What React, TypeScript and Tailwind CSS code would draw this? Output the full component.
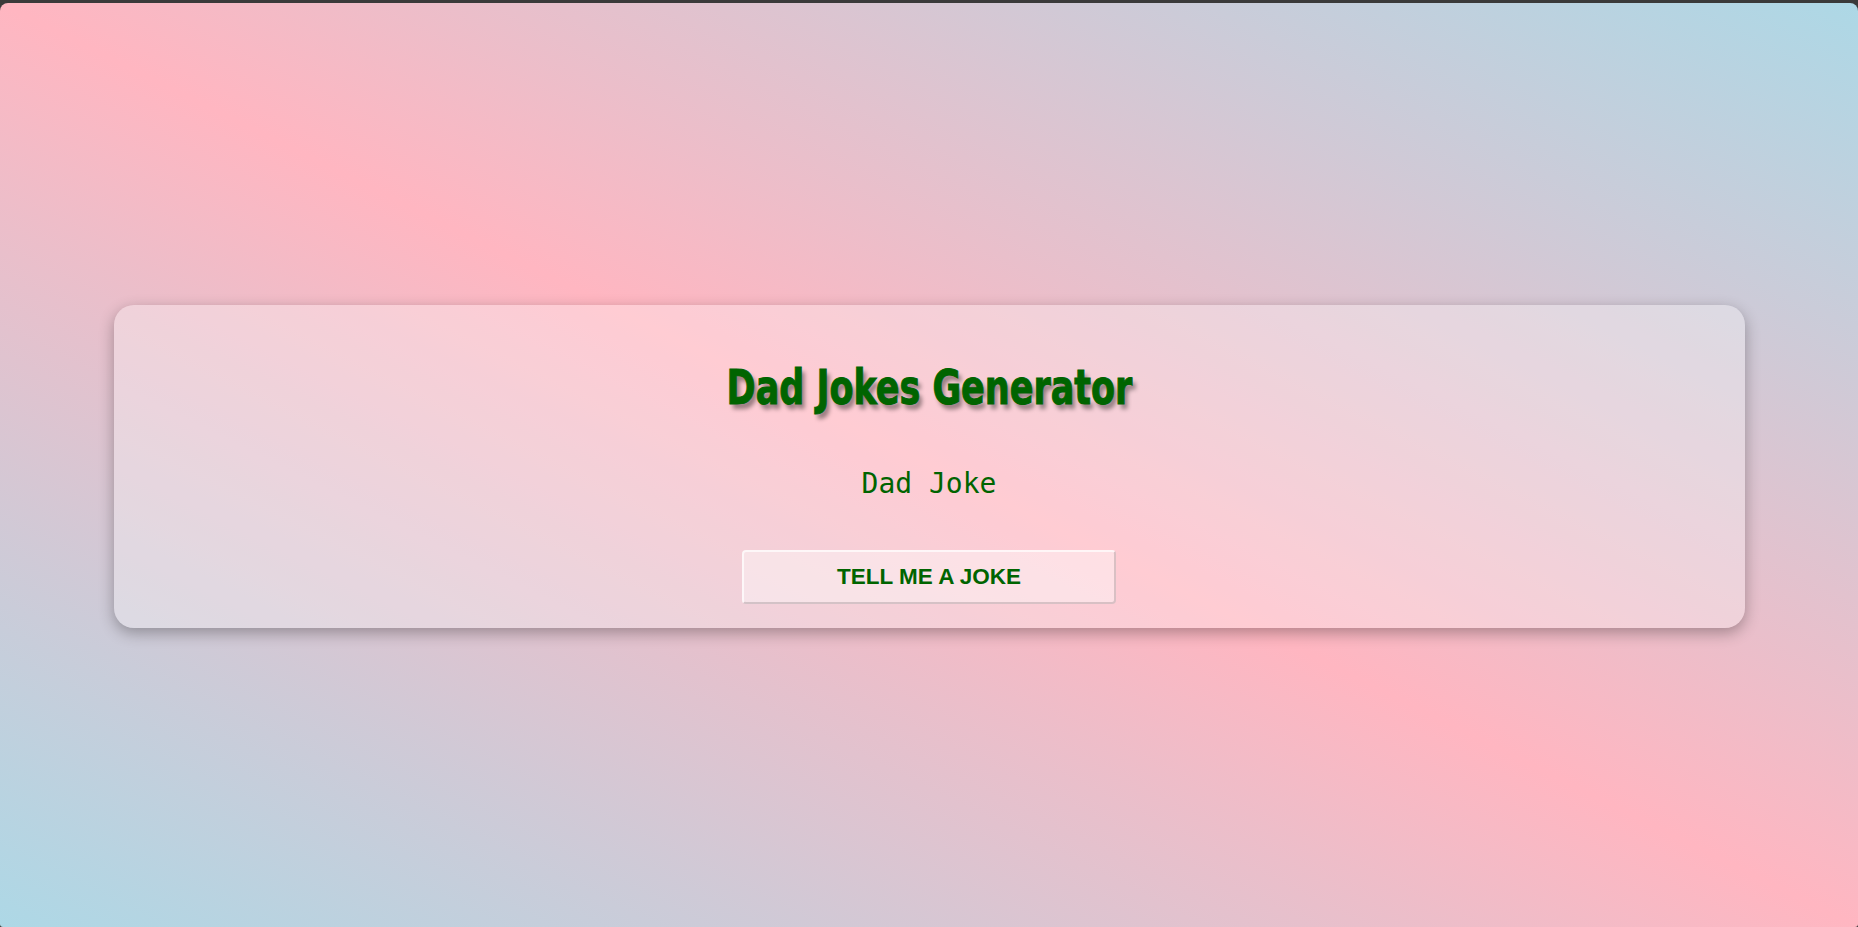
import React, { useState } from "react";

const jokes = [
  "Dad Joke",
  "I'm afraid for the calendar. Its days are numbered.",
  "Why do fathers take an extra pair of socks when they go golfing? In case they get a hole in one!",
  "What do you call a fake noodle? An impasta.",
];

export default function App() {
  const [joke, setJoke] = useState(jokes[0]);

  function nextJoke() {
    const rest = jokes.filter((j) => j !== joke && j !== "Dad Joke");
    setJoke(rest[Math.floor(Math.random() * rest.length)]);
  }

  return (
    <div className="h-[927px] w-full bg-[#3a3a3a] pt-[3px]">
      <div className="flex h-full w-full items-center justify-center rounded-t-[8px] rounded-b-[3px] bg-[linear-gradient(to_top_right,#add8e6,#ffb6c1,#add8e6)]">
        <div className="mt-[3px] flex h-[323px] w-[1631px] flex-col items-center rounded-[20px] bg-[rgba(255,255,255,0.3)] pt-[54px] shadow-[0_5px_15px_rgba(0,0,0,0.3)]">
          <h1 className="scale-x-[0.81] whitespace-nowrap text-[48px] font-bold leading-[1.2] text-[#006400] [font-family:'Liberation_Sans_Narrow','DejaVu_Sans_Condensed',Roboto,sans-serif] [-webkit-text-stroke:1px_#006400] [text-shadow:4px_5px_5px_rgba(0,0,0,0.4)]">
            Dad Jokes Generator
          </h1>
          <p className="mt-[50px] text-[28px] leading-[1.2] text-[#006400] [font-family:'DejaVu_Sans_Mono',monospace]">
            {joke}
          </p>
          <button
            onClick={nextJoke}
            className="mt-[50px] h-[54px] w-[374px] shrink-0 rounded-[4px] border-2 border-t-[rgba(255,255,255,0.7)] border-l-[rgba(255,255,255,0.7)] border-b-[rgba(0,0,0,0.15)] border-r-[rgba(0,0,0,0.15)] bg-[rgba(255,255,255,0.4)] text-[22.5px] font-bold text-[#006400] [font-family:'Liberation_Sans',Arial,sans-serif]"
          >
            TELL ME A JOKE
          </button>
        </div>
      </div>
    </div>
  );
}
